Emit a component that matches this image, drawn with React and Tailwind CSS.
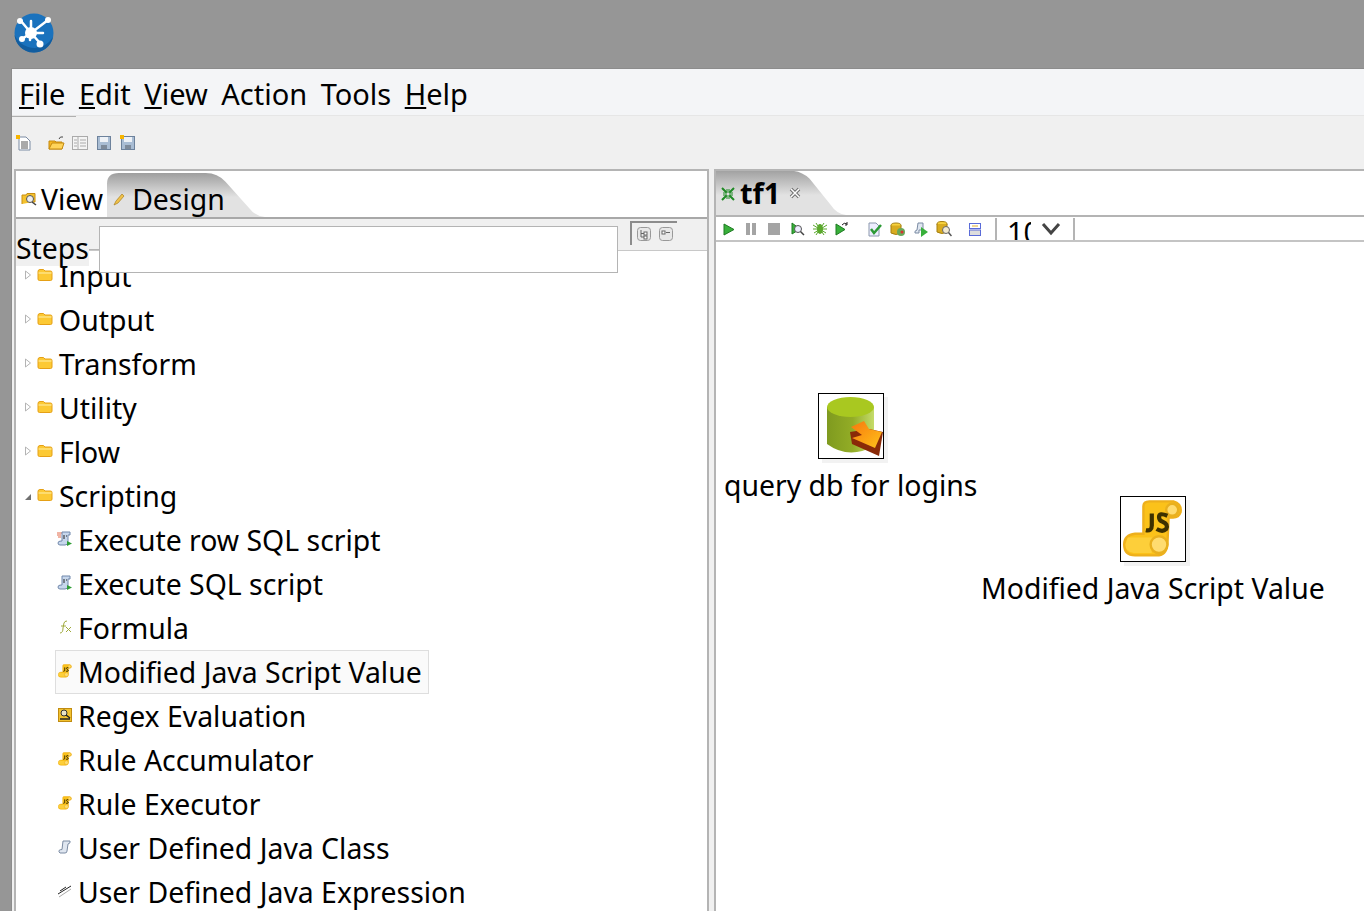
const font = { fontFamily: '"Noto Sans", "Open Sans", sans-serif' };

const Folder = () => (
  <svg width="16" height="14" viewBox="0 0 16 14">
    <path d="M1 3.500Q1 1.500 3 1.500H6.500L8 3H13.500Q15 3 15 4.500V11Q15 12.500 13.500 12.500H2.500Q1 12.500 1 11Z" fill="#fcc934" stroke="#e5a016" />
    <path d="M1.500 5H14.500" stroke="#fff0a8" />
  </svg>
);

const Closed = () => (
  <svg width="8" height="10" viewBox="0 0 8 10"><path d="M1.500 1V9L6.500 5Z" fill="#fff" stroke="#b4b4b4" /></svg>
);
const Open = () => (
  <svg width="8" height="8" viewBox="0 0 8 8"><path d="M7 1V7H1Z" fill="#707070" /></svg>
);

const JsScroll = ({ size = 14, className = "" }) => (
  <svg className={className} width={size} height={size} viewBox="0 0 50 50">
    <path d="M17 6Q17 2 22 2H42Q49 4 48 11Q46 17 38 15L37 38Q36 47 28 47H10Q1 47 1 38Q1 30 10 29H17Z" fill="#fbc21a" stroke="#eeb01c" strokeWidth="2" />
    <path d="M4 32H28Q22 36 24 45H9Q2 44 2 38Z" fill="#fdcf3a" />
    <circle cx="41" cy="9" r="5" fill="#ffdc70" stroke="#e9b01e" strokeWidth="2" />
    <circle cx="30" cy="38" r="7" fill="#ffdc70" stroke="#e9b01e" strokeWidth="2" />
    <path d="M24 12V22Q24 27 19 26M37 14Q30 11 30 15Q30 18 33 19Q38 21 36 25Q33 28 28 25" fill="none" stroke="#3d3000" strokeWidth="3.500" />
  </svg>
);

const BlueScroll = ({ fx }) => (
  <svg width="16" height="16" viewBox="0 0 16 16">
    {fx && <path d="M0 2H5M0 4H4M1 6H4" stroke="#e26a4a" />}
    <path d="M5 1H13V4H11V11Q11 14 8 14H3Q1 14 1 12Q1 10 4 10H5Z" fill="#c7d7ec" stroke="#7188ab" />
    <path d="M7 4V8M9 5H10" stroke="#222" />
    <path d="M10 10V15L15 12.500Z" fill="#2f9e36" />
  </svg>
);

const items = [
  { t: "Execute row SQL script", i: <BlueScroll fx /> },
  { t: "Execute SQL script", i: <BlueScroll /> },
  {
    t: "Formula",
    i: (
      <svg width="16" height="16" viewBox="0 0 16 16">
        <path d="M3 14Q6 14 6 9L7 4Q7.500 2 10 2M4 7H9M9 8L14 13M14 8L9 13" fill="none" stroke="#a0aa3c" />
      </svg>
    ),
  },
  { t: "Modified Java Script Value", i: <JsScroll />, sel: true },
  {
    t: "Regex Evaluation",
    i: (
      <svg width="14" height="14" viewBox="0 0 14 14">
        <rect x=".5" y=".5" width="13" height="13" fill="#f2c230" stroke="#c18c10" />
        <circle cx="6" cy="5" r="3" fill="#e9e3c8" stroke="#333" />
        <path d="M2 11H12M8 7L12 10" stroke="#222" strokeWidth="1.500" />
      </svg>
    ),
  },
  { t: "Rule Accumulator", i: <JsScroll /> },
  { t: "Rule Executor", i: <JsScroll /> },
  {
    t: "User Defined Java Class",
    i: (
      <svg width="14" height="14" viewBox="0 0 14 14">
        <path d="M5 1H12Q13 3 10 4L9 11Q9 13 7 13H2Q0.500 12 1 10.500Q2 9.500 4 9.500Z" fill="#dfe6f0" stroke="#7b8ba3" />
      </svg>
    ),
  },
  {
    t: "User Defined Java Expression",
    i: (
      <svg width="16" height="14" viewBox="0 0 16 14">
        <path d="M1 10L14 2M3 7L9 3" stroke="#222" />
        <path d="M2 13L14 5" stroke="#aaa" />
      </svg>
    ),
  },
];

const Tool = ({ children, className = "" }) => <span className={`flex items-center justify-center ${className}`}>{children}</span>;

const Floppy = ({ star }) => (
  <svg width="16" height="16" viewBox="0 0 16 16">
    <rect x="1.500" y="1.500" width="13" height="13" fill="#a9bdd4" stroke="#6d829c" />
    <rect x="4" y="2" width="8" height="5" fill="#eef2f7" />
    <rect x="5" y="10" width="6" height="4" fill="#7d8a9a" />
    {star && <rect x="0" y="0" width="4" height="4" fill="#f7b500" />}
  </svg>
);

const Play = () => (
  <svg width="12" height="13" viewBox="0 0 12 13"><path d="M1 1V12L11 6.500Z" fill="#38b03a" stroke="#1e7a22" /></svg>
);

function Node({ label, children }) {
  return (
    <div className="flex flex-col items-center">
      <div className="w-[66px] h-[66px] border border-black bg-white shadow-[4px_4px_0_#f2f2f2] flex items-center justify-center">{children}</div>
      <div className="text-[28.4px] leading-[40px] text-black whitespace-nowrap mt-[6px]">{label}</div>
    </div>
  );
}

export default function App() {
  return (
    <div style={font} className="w-[1364px] h-[911px] overflow-hidden bg-[#969696] flex flex-col text-black">
      <div className="h-[68px] shrink-0 pl-[14px] pt-[13px]">
        <svg width="40" height="40" viewBox="0 0 40 40">
          <circle cx="20" cy="20" r="19.500" fill="#1a72bd" />
          <path d="M0.500 22A19.500 19.500 0 0 0 39 24Q30 38 14 34Q5 31 0.500 22Z" fill="#125d9f" />
          <g stroke="#fff" strokeWidth="2.500" strokeLinecap="round">
            <path d="M17 20L34 7M17 20L7 8M17 20L26 30M17 20L8 26M17 20V8M17 20H29M17 20L16 27" />
          </g>
          <circle cx="17" cy="20" r="6" fill="#fff" />
          <circle cx="34" cy="7" r="3" fill="#fff" />
          <circle cx="6" cy="8" r="3" fill="#fff" />
          <circle cx="26" cy="31" r="3.500" fill="#fff" />
          <circle cx="8" cy="26" r="3" fill="#fff" />
        </svg>
      </div>
      <div className="flex-1 ml-[11px] border-l border-t border-[#8c8c8c] bg-[#f0f0f0] flex flex-col min-h-0">
        <div className="h-[47px] shrink-0 bg-[#f4f5f7] border-b border-[#e6e6e6] flex items-center pl-[7px] pt-[4px] gap-[13.5px] text-[29px] leading-[40px] relative">
          <span><u>F</u>ile</span>
          <span><u>E</u>dit</span>
          <span><u>V</u>iew</span>
          <span>Action</span>
          <span>Tools</span>
          <span><u>H</u>elp</span>
          <div className="absolute left-0 bottom-[-2px] w-[64px] h-px bg-[#b0b0b0]" />
        </div>
        <div className="h-[53px] shrink-0 flex items-center pl-[4px]">
          <Tool>
            <svg width="16" height="16" viewBox="0 0 16 16">
              <path d="M3 2H10L14 6V15H3Z" fill="#fff" stroke="#7b8ba3" />
              <path d="M5 7H12M5 9H12M5 11H12M5 13H12" stroke="#555" />
              <rect x="0" y="0" width="4" height="4" fill="#f7b500" />
            </svg>
          </Tool>
          <Tool className="ml-[16px]">
            <svg width="17" height="16" viewBox="0 0 17 16">
              <path d="M1 14V6H7L8 7H14V14Z" fill="#f8b71f" stroke="#c48a10" />
              <path d="M1 14L4 8H16L14 14Z" fill="#ffd45a" stroke="#c48a10" />
              <path d="M11 4Q12 1 15 2" fill="none" stroke="#444" />
            </svg>
          </Tool>
          <Tool className="ml-[7px]">
            <svg width="16" height="14" viewBox="0 0 16 14">
              <rect x=".5" y=".5" width="15" height="13" fill="#f4f4f4" stroke="#aaa" />
              <path d="M6 1V13M2 4H5M2 7H5M2 10H5M8 4H14M8 7H14M8 10H14" stroke="#aaa" />
            </svg>
          </Tool>
          <Tool className="ml-[8px]"><Floppy /></Tool>
          <Tool className="ml-[8px]"><Floppy star /></Tool>
        </div>
        <div className="flex-1 flex min-h-0 pl-[2px] gap-[5px]">
          <section className="w-[695px] shrink-0 bg-white border-l-2 border-t-2 border-r-2 border-[#b4b4b4] flex flex-col min-h-0 relative">
            <div className="h-[48px] shrink-0 border-b-2 border-[#a8a8a8] relative flex items-center pt-[10px] text-[28.4px]">
              <svg className="absolute left-[91px] top-[1px]" width="158" height="45" viewBox="0 0 160 46" preserveAspectRatio="none">
                <defs>
                  <linearGradient id="tabA" x1="0" y1="0" x2="0" y2="1">
                    <stop offset="0" stopColor="#9e9e9e" />
                    <stop offset=".55" stopColor="#e2e2e2" />
                  </linearGradient>
                </defs>
                <path d="M0 46V12Q0 1 12 1H100Q112 1 120 10L145 38Q150 45 160 46Z" fill="url(#tabA)" />
              </svg>
              <span className="relative ml-[5px] mr-[4px] w-[16px] flex justify-center">
                <svg width="16" height="14" viewBox="0 0 16 14">
                  <path d="M1 12V3H5L6 1.500H14V10H12" fill="#f4c22e" stroke="#c98f12" />
                  <circle cx="9" cy="7" r="3.500" fill="#eee" stroke="#555" />
                  <path d="M11 10L15 13" stroke="#444" strokeWidth="1.500" />
                </svg>
              </span>
              <span className="relative">View</span>
              <span className="relative ml-[10px] mr-[7px]">
                <svg width="12" height="13" viewBox="0 0 12 13">
                  <path d="M1 12L3 8L9 1L11 3L5 10Z" fill="#f0c24a" stroke="#a98020" strokeWidth=".7" />
                </svg>
              </span>
              <span className="relative">Design</span>
            </div>
            <div className="h-[32px] shrink-0 bg-[#f0f0f0] border-b border-[#c8c8c8] flex items-start relative">
              <span className="text-[28.4px] leading-[40px] mt-[9px] relative z-10 bg-[#f0f0f0] h-[38px] overflow-visible">Steps</span>
              <div className="absolute right-[30px] top-[2px] w-[47px] h-[24px] border-t-2 border-l-2 border-[#8c8c8c] bg-[#f0f0f0] flex items-center justify-center gap-[8px]">
                <svg width="14" height="14" viewBox="0 0 14 14">
                  <rect x=".5" y=".5" width="13" height="13" rx="3" fill="#e8e8e8" stroke="#999" />
                  <path d="M4 3V10H7M4 6.500H7" stroke="#666" fill="none" />
                  <rect x="7" y="5" width="3" height="3" fill="#fff" stroke="#666" />
                  <rect x="7" y="9" width="3" height="3" fill="#fff" stroke="#666" />
                </svg>
                <svg width="14" height="14" viewBox="0 0 14 14">
                  <rect x=".5" y=".5" width="13" height="13" rx="3" fill="#e8e8e8" stroke="#999" />
                  <rect x="3" y="4" width="3" height="3" fill="#fff" stroke="#666" />
                  <path d="M7 5.500H11" stroke="#666" />
                </svg>
              </div>
            </div>
            <div className="absolute left-[83px] top-[55px] w-[519px] h-[47px] bg-white border border-[#b4b4b4] z-20" />
            <div className="absolute left-[73px] top-[78px] w-[10px] h-px bg-[#b4b4b4] z-20" />
            <div className="flex-1 min-h-0 overflow-hidden pt-[3px]">
              {["Input", "Output", "Transform", "Utility", "Flow"].map((t) => (
                <div key={t} className="h-[44px] flex items-center text-[28.4px] leading-[40px]">
                  <span className="w-[8px] ml-[8px] mr-[5px] -mt-[2px] flex"><Closed /></span>
                  <span className="w-[16px] -mt-[2px] flex"><Folder /></span>
                  <span className="ml-[6px]">{t}</span>
                </div>
              ))}
              <div className="h-[44px] flex items-center text-[28.4px] leading-[40px]">
                <span className="w-[8px] ml-[8px] mr-[5px] mt-[1px] flex"><Open /></span>
                <span className="w-[16px] -mt-[2px] flex"><Folder /></span>
                <span className="ml-[6px]">Scripting</span>
              </div>
              {items.map((it) => (
                <div key={it.t} className="h-[44px] flex items-center text-[28.4px] leading-[40px] ml-[39px]">
                  <div className={`flex items-center h-[44px] pr-[3px] ${it.sel ? "bg-[#fafafa] border border-[#dedede] pr-[6px]" : ""}`}>
                    <span className={`w-[16px] -mt-[2px] flex justify-center ${it.sel ? "ml-[1px]" : "ml-[2px]"}`}>{it.i}</span>
                    <span className="ml-[5px] whitespace-nowrap">{it.t}</span>
                  </div>
                </div>
              ))}
            </div>
          </section>
          <section className="flex-1 min-w-0 bg-white border-l-2 border-t-2 border-[#b4b4b4] flex flex-col min-h-0">
            <div className="h-[46px] shrink-0 border-b-2 border-[#b4b4b4] relative flex items-center">
              <svg className="absolute left-0 top-0" width="130" height="44" viewBox="0 0 125 46" preserveAspectRatio="none">
                <defs>
                  <linearGradient id="tabB" x1="0" y1="0" x2="0" y2="1">
                    <stop offset="0" stopColor="#a2a2a2" />
                    <stop offset=".55" stopColor="#e2e2e2" />
                  </linearGradient>
                </defs>
                <path d="M0 46V0H75Q83 1 90 8L110 35Q116 45 125 46Z" fill="url(#tabB)" />
              </svg>
              <span className="relative ml-[5px] mt-[1px] flex">
                <svg width="14" height="14" viewBox="0 0 14 14" stroke="#1f8a24" strokeWidth="2" fill="none">
                  <path d="M1 1L5.500 5.500M13 1L8.500 5.500M1 13L5.500 8.500M13 13L8.500 8.500" />
                  <path d="M2 6H6V2M12 6H8V2M2 8H6V12M12 8H8V12" strokeWidth="1" />
                </svg>
              </span>
              <span className="relative ml-[5px] text-[29px] font-bold leading-[40px]">tf1</span>
              <span className="relative ml-[9px] flex">
                <svg width="12" height="12" viewBox="0 0 12 12">
                  <path d="M2 2L10 10M10 2L2 10" stroke="#6f6f6f" strokeWidth="3.500" />
                  <path d="M2 2L10 10M10 2L2 10" stroke="#fff" strokeWidth="1.500" />
                </svg>
              </span>
            </div>
            <div className="h-[25px] shrink-0 border-b-2 border-[#c4c4c4] flex items-center pl-[7px] pt-[1px] overflow-hidden">
              <Play />
              <svg className="ml-[11px]" width="10" height="12" viewBox="0 0 10 12"><rect width="4" height="12" fill="#a4a4a4" /><rect x="6" width="4" height="12" fill="#a4a4a4" /></svg>
              <svg className="ml-[12px]" width="12" height="12" viewBox="0 0 12 12"><rect width="12" height="12" fill="#a4a4a4" /></svg>
              <svg className="ml-[11px]" width="14" height="14" viewBox="0 0 14 14">
                <path d="M1 1V12L9 7Z" fill="#38b03a" stroke="#1e7a22" />
                <circle cx="7" cy="7" r="3.500" fill="#eef" stroke="#555" />
                <path d="M9.500 9.500L13 13" stroke="#444" strokeWidth="1.500" />
              </svg>
              <svg className="ml-[7px]" width="16" height="14" viewBox="0 0 16 14">
                <ellipse cx="8" cy="7" rx="3" ry="5" fill="#5aa82c" />
                <path d="M1 3L14 11M15 3L2 11M1 7H15M4 1L12 13M12 1L4 13" stroke="#5aa82c" />
              </svg>
              <svg className="ml-[7px]" width="14" height="14" viewBox="0 0 14 14">
                <path d="M1 2V13L10 7.500Z" fill="#38b03a" stroke="#1e7a22" />
                <path d="M7 3Q9 0 12 2M12 0V3H10" fill="none" stroke="#222" />
              </svg>
              <svg className="ml-[18px]" width="16" height="15" viewBox="0 0 16 15">
                <path d="M2 1H9L12 4V14H2Z" fill="#eef" stroke="#8b98ad" />
                <path d="M4 7L7 11L14 3" fill="none" stroke="#2c9a35" strokeWidth="2.500" />
              </svg>
              <svg className="ml-[7px]" width="16" height="15" viewBox="0 0 16 15">
                <ellipse cx="6" cy="3.500" rx="5" ry="2.500" fill="#f7d23e" stroke="#a57f10" />
                <path d="M1 3.500V11Q6 14 11 11V3.500" fill="#d9ac20" stroke="#a57f10" />
                <circle cx="11" cy="10" r="4" fill="#6aa85a" />
                <circle cx="12" cy="10" r="1.500" fill="#d93030" />
              </svg>
              <svg className="ml-[7px]" width="16" height="15" viewBox="0 0 16 15">
                <path d="M5 1H10V8H6V11H2Q1 9 4 8Z" fill="#dfe6f0" stroke="#7b8ba3" />
                <path d="M8 5V15L15 10Z" fill="#38b03a" />
              </svg>
              <svg className="ml-[7px]" width="16" height="16" viewBox="0 0 16 16">
                <ellipse cx="6" cy="3" rx="5" ry="2.500" fill="#f7d23e" stroke="#a57f10" />
                <path d="M1 3V11Q6 14 11 11V3" fill="#d9ac20" stroke="#a57f10" />
                <circle cx="10" cy="9" r="3.500" fill="#f2ead2" stroke="#666" />
                <path d="M12.500 11.500L15.500 15" stroke="#555" strokeWidth="1.500" />
              </svg>
              <svg className="ml-[17px]" width="12" height="13" viewBox="0 0 12 13">
                <rect x=".5" y=".5" width="11" height="5" fill="#fff" stroke="#5a6bd8" />
                <rect x=".5" y="7" width="11" height="5.500" fill="#ddd" stroke="#5a6bd8" />
                <path d="M3 3H9" stroke="#e0b030" />
              </svg>
              <div className="ml-[14px] h-[23px] border-l-2 border-[#b4b4b4] w-[80px] relative overflow-hidden flex items-center border-r-2">
                <span className="ml-[10px] text-[29px] leading-[40px] w-[24px] overflow-hidden whitespace-nowrap mt-[6px]">100</span>
                <svg className="ml-[10px]" width="20" height="14" viewBox="0 0 20 14">
                  <path d="M2 2L10 11L18 2" fill="none" stroke="#444" strokeWidth="3" />
                </svg>
              </div>
            </div>
            <div className="flex-1 relative min-h-0">
              <div className="absolute left-[8px] top-[151px]">
                <Node label="query db for logins">
                  <svg className="blur-[0.4px]" width="64" height="64" viewBox="0 0 64 64">
                    <defs>
                      <linearGradient id="cyl" x1="0" y1="0" x2="1" y2="0">
                        <stop offset="0" stopColor="#7f9a1f" />
                        <stop offset=".55" stopColor="#93ad26" />
                        <stop offset="1" stopColor="#c5dc6a" />
                      </linearGradient>
                      <linearGradient id="arr" x1="0" y1="0" x2="1" y2="1">
                        <stop offset="0" stopColor="#f7780d" />
                        <stop offset="1" stopColor="#ffc21a" />
                      </linearGradient>
                    </defs>
                    <path d="M8 13V50Q30 66 55 52V13Z" fill="url(#cyl)" />
                    <ellipse cx="31.500" cy="13" rx="23.500" ry="10" fill="#a9c820" />
                    <path d="M31 38L33 50L60 62L64 38L50 35Z" fill="#8a2a08" />
                    <path d="M32 33L45 27L50 35L63 38L56 54L33 44L43 41Z" fill="url(#arr)" />
                  </svg>
                </Node>
              </div>
              <div className="absolute left-[265px] top-[254px]">
                <Node label="Modified Java Script Value">
                  <JsScroll size={60} className="blur-[0.4px]" />
                </Node>
              </div>
            </div>
          </section>
        </div>
      </div>
    </div>
  );
}
